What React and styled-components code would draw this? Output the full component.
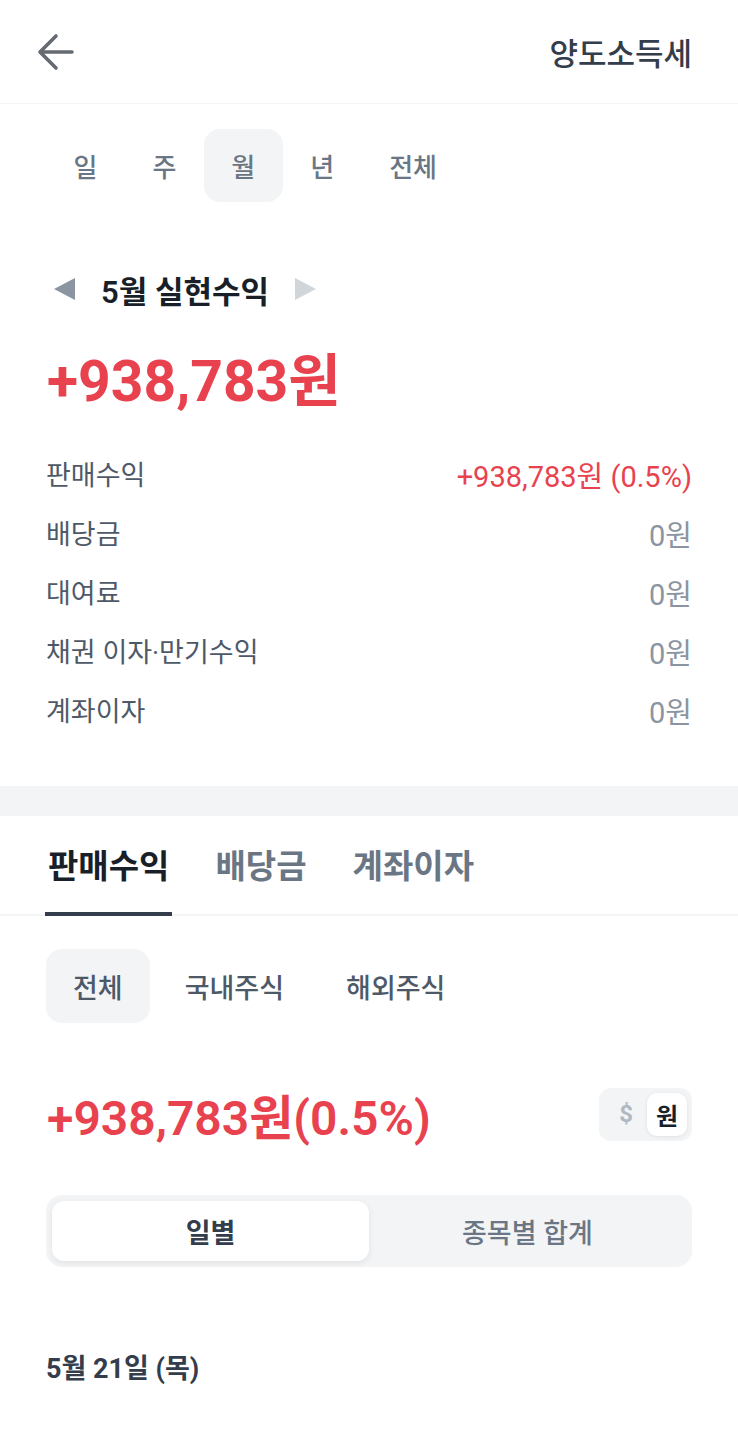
import styled, { createGlobalStyle } from 'styled-components';

const Global = createGlobalStyle`
    body {
        margin: 0;
        background: #ffffff;
        font-family: Roboto, "Noto Sans CJK KR", sans-serif;
        -webkit-font-smoothing: antialiased;
    }
`;

const Page = styled.div`
    width: 738px;
    min-height: 1440px;
    background: #ffffff;
    color: #191f28;
`;

const Header = styled.header`
    height: 104px;
    box-sizing: border-box;
    border-bottom: 1px solid #f2f4f6;
    display: flex;
    align-items: center;
    justify-content: space-between;
    padding: 0 46px 0 34px;

    h1 {
        margin: 0;
        font-size: 31px;
        font-weight: 500;
        color: #333d4b;
    }
`;

const BackButton = styled.button`
    border: none;
    background: none;
    padding: 0;
    width: 44px;
    height: 44px;
    display: flex;
    align-items: center;
    justify-content: center;
    cursor: pointer;
`;

const Section = styled.section`
    padding: 0 46px;
`;

const PeriodRow = styled.div`
    display: flex;
    padding-top: 25px;
`;

const Chip = styled.button`
    border: none;
    background: ${p => p.$active ? '#f2f4f6' : 'transparent'};
    border-radius: 16px;
    height: ${p => p.$h || 73}px;
    padding: 0 ${p => p.$pad || 27.5}px;
    font-family: inherit;
    font-size: ${p => p.$size || 26}px;
    font-weight: 500;
    color: ${p => p.$color || '#6b7684'};
    cursor: pointer;
`;

const MonthRow = styled.div`
    display: flex;
    align-items: center;
    margin-top: 67px;
    height: 40px;
    padding-left: 8px;
`;

const MonthTitle = styled.span`
    font-size: 31px;
    font-weight: 600;
    color: #191f28;
    margin: 0 26px 0 26px;
`;

const Triangle = styled.span`
    width: 0;
    height: 0;
    border-top: 11px solid transparent;
    border-bottom: 11px solid transparent;
    ${p => p.$dir === 'left'
        ? `border-right: 21px solid ${p.$color};`
        : `border-left: 21px solid ${p.$color};`}
`;

const BigAmount = styled.div`
    margin-top: 40px;
    margin-left: 1px;
    font-size: 57px;
    font-weight: 700;
    color: #e8424f;
    line-height: 66px;
`;

const Details = styled.div`
    margin-top: 29px;
    padding-bottom: 47px;
`;

const DetailRow = styled.div`
    display: flex;
    justify-content: space-between;
    align-items: center;
    height: 59px;

    .label {
        font-size: 27px;
        color: #4e5968;
    }
    .value {
        font-size: 29px;
        color: ${p => p.$red ? '#e8424f' : '#8b95a1'};
    }
`;

const Band = styled.div`
    height: 30px;
    background: #f2f4f6;
`;

const Tabs = styled.div`
    display: flex;
    gap: 40px;
    padding: 0 45px;
    border-bottom: 2px solid #f2f4f6;
    height: 100px;
    box-sizing: border-box;
    align-items: stretch;
`;

const Tab = styled.div`
    display: flex;
    align-items: center;
    font-size: 33px;
    font-weight: ${p => p.$active ? 700 : 600};
    color: ${p => p.$active ? '#191f28' : '#6b7684'};
    padding: 0 3px;
    margin-bottom: -2px;
    border-bottom: 4px solid ${p => p.$active ? '#333d4b' : 'transparent'};
`;

const MarketRow = styled.div`
    display: flex;
    gap: 8px;
    margin-top: 33px;
`;

const AmountRow = styled.div`
    display: flex;
    justify-content: space-between;
    align-items: center;
    margin-top: 56px;

    .amount {
        font-size: 48px;
        font-weight: 600;
        color: #e8424f;
        margin-left: 1px;
    }
`;

const Currency = styled.div`
    display: flex;
    align-items: center;
    background: #f2f4f6;
    border-radius: 12px;
    padding: 5px 5px 5px 20px;
    gap: 14px;
`;

const CurrencyItem = styled.span`
    font-size: 24px;
    font-weight: 700;
    color: ${p => p.$active ? '#191f28' : '#b0b8c1'};
    background: ${p => p.$active ? '#ffffff' : 'transparent'};
    border-radius: 10px;
    height: 43px;
    padding: 0 ${p => p.$active ? 9 : 0}px;
    display: flex;
    align-items: center;
    box-shadow: ${p => p.$active ? '0 1px 4px rgba(0,0,0,0.08)' : 'none'};
`;

const Segmented = styled.div`
    display: grid;
    grid-template-columns: 1fr 1fr;
    background: #f2f4f6;
    border-radius: 16px;
    padding: 6px;
    margin-top: 46px;
    height: 72px;
    box-sizing: border-box;
`;

const Segment = styled.div`
    display: flex;
    align-items: center;
    justify-content: center;
    border-radius: 12px;
    font-size: 27px;
    font-weight: ${p => p.$active ? 600 : 500};
    color: ${p => p.$active ? '#333d4b' : '#6b7684'};
    background: ${p => p.$active ? '#ffffff' : 'transparent'};
    box-shadow: ${p => p.$active ? '0 2px 6px rgba(0,0,0,0.08)' : 'none'};
`;

const DateHead = styled.div`
    margin-top: 80px;
    font-size: 27px;
    font-weight: 700;
    color: #333d4b;
`;

const details = [
    { label: '판매수익', value: '+938,783원 (0.5%)', red: true },
    { label: '배당금', value: '0원' },
    { label: '대여료', value: '0원' },
    { label: '채권 이자·만기수익', value: '0원' },
    { label: '계좌이자', value: '0원' },
];

const App = () => {
    return (
        <Page>
            <Global />
            <Header>
                <BackButton aria-label='back'>
                    <svg width="40" height="40" viewBox="0 0 40 40" fill="none">
                        <path d="M36 20H5M20 4L4 20l16 16" stroke="#666b72" strokeWidth="3.6" strokeLinecap="round" strokeLinejoin="round" />
                    </svg>
                </BackButton>
                <h1>양도소득세</h1>
            </Header>

            <Section>
                <PeriodRow>
                    {['일', '주', '월', '년', '전체'].map((p) => (
                        <Chip key={p} $active={p === '월'}>{p}</Chip>
                    ))}
                </PeriodRow>

                <MonthRow>
                    <Triangle $dir='left' $color='#8b95a1' />
                    <MonthTitle>5월 실현수익</MonthTitle>
                    <Triangle $dir='right' $color='#d1d6db' />
                </MonthRow>

                <BigAmount>+938,783원</BigAmount>

                <Details>
                    {details.map((d) => (
                        <DetailRow key={d.label} $red={d.red}>
                            <span className='label'>{d.label}</span>
                            <span className='value'>{d.value}</span>
                        </DetailRow>
                    ))}
                </Details>
            </Section>

            <Band />

            <Tabs>
                <Tab $active>판매수익</Tab>
                <Tab>배당금</Tab>
                <Tab>계좌이자</Tab>
            </Tabs>

            <Section>
                <MarketRow>
                    <Chip $active $h={74} $pad={27} $size={27} $color='#4e5968'>전체</Chip>
                    <Chip $h={74} $pad={27} $size={27} $color='#4e5968'>국내주식</Chip>
                    <Chip $h={74} $pad={27} $size={27} $color='#4e5968'>해외주식</Chip>
                </MarketRow>

                <AmountRow>
                    <span className='amount'>+938,783원(0.5%)</span>
                    <Currency>
                        <CurrencyItem>$</CurrencyItem>
                        <CurrencyItem $active>원</CurrencyItem>
                    </Currency>
                </AmountRow>

                <Segmented>
                    <Segment $active>일별</Segment>
                    <Segment>종목별 합계</Segment>
                </Segmented>

                <DateHead>5월 21일 (목)</DateHead>
            </Section>
        </Page>
    );
};

export default App;
